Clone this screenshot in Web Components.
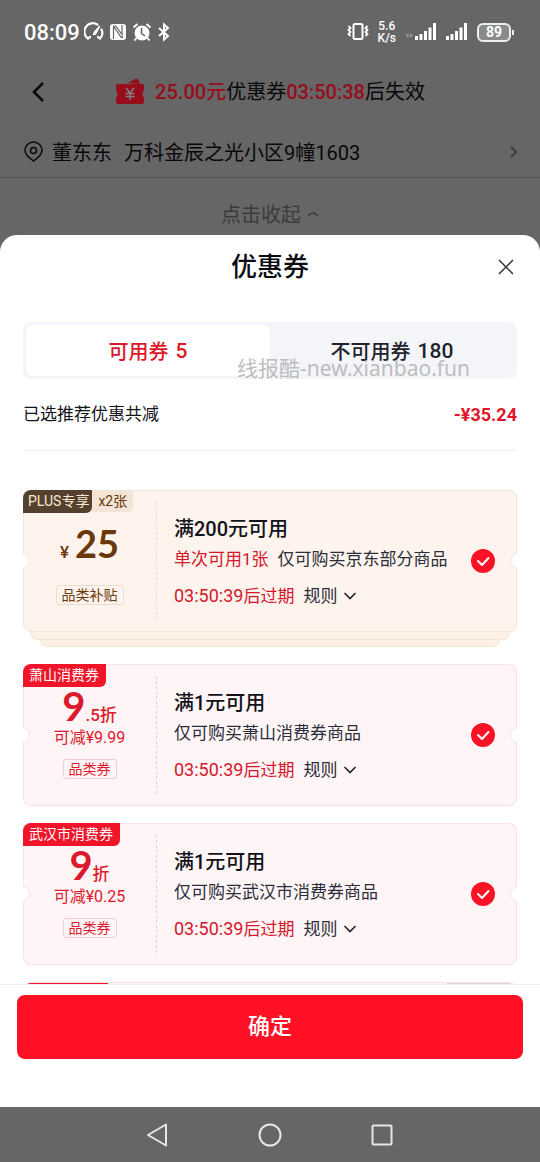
<!DOCTYPE html>
<html lang="zh-CN">
<head>
<meta charset="utf-8">
<meta name="viewport" content="width=device-width, initial-scale=1">
<title>优惠券</title>
<style>
  html, body { margin: 0; height: 100%; }
  body { background: #666; font-family: Roboto, "Noto Sans CJK SC", sans-serif; }
</style>
</head>
<body>
<coupon-page></coupon-page>
<script>
const define = (name, html, setup) => {
  const template = document.createElement('template');
  template.innerHTML = html;
  customElements.define(name, class extends HTMLElement {
    constructor() {
      super();
      this.attachShadow({ mode: 'open' }).append(template.content.cloneNode(true));
    }
    connectedCallback() { if (setup) setup(this, this.shadowRoot); }
  });
};

define('status-bar', `
<style>
  :host { display: flex; align-items: center; height: 64px; padding: 0 29px 0 24px; color: #fff; box-sizing: border-box; }
  .time { font-size: 22px; font-weight: 500; }
  svg { display: block; flex: none; }
  .left, .right { display: flex; align-items: center; gap: 4px; }
  .right { margin-left: auto; gap: 9px; }
  .speed { font-size: 12px; line-height: 12px; font-weight: 500; text-align: center; }
  .speed span { display: block; }
  .battery { position: relative; width: 34px; height: 19px; box-sizing: border-box; border: 2px solid #eee; border-radius: 6px; background: #8a8a8a; font-size: 14px; font-weight: 700; line-height: 15px; text-align: center; }
  .battery::after { content: ""; position: absolute; right: -5px; top: 5px; width: 2px; height: 5px; background: #eee; }
</style>
<div class="left">
  <span class="time">08:09</span>
  <svg width="20" height="20" viewBox="0 0 20 20" fill="none" stroke="#fff" stroke-width="2.200" stroke-linecap="round"><path d="M4 16.500A8 8 0 0 1 13.500 2.700M17.500 7.500A8 8 0 0 1 16 16.500M4 16.500l2-1.500M16 16.500l-2-1.500"/><path d="M9.500 12.500L10.500 10 15.500 4.500 11.500 12z" fill="#fff" stroke-width="1.500" stroke-linejoin="round"/></svg>
  <svg width="20" height="20" viewBox="0 0 20 20"><rect x="2" y="2" width="16" height="16" rx="3" fill="#fff"/><path d="M5.500 17V4.500q1-1.500 2.500 0l6 8V3M6 5l7 10q1.500 1.500 1.500-1" fill="none" stroke="#666" stroke-width="1.200"/></svg>
  <svg width="20" height="20" viewBox="0 0 20 20"><circle cx="10" cy="11" r="7.500" fill="#fff"/><path d="M1.500 5.500l4-3.500M18.500 5.500l-4-3.500M4.500 16l-2 2.500M15.500 16l2 2.500" stroke="#fff" stroke-width="2"/><path d="M9.500 6v5.500l3.500 2.500" stroke="#666" stroke-width="1.500" fill="none"/></svg>
  <svg width="16" height="20" viewBox="0 0 16 20" fill="none" stroke="#fff" stroke-width="2"><path d="M3 6l9 8-4 3.500V2.500L12 6l-9 8"/></svg>
</div>
<div class="right">
  <svg width="22" height="20" viewBox="0 0 22 20" fill="none" stroke="#fff" stroke-width="2"><rect x="6.500" y="2" width="9" height="15" rx="1.500"/><path d="M1.500 4l2 2-2 2 2 2-2 2 2 2M20.500 4l-2 2 2 2-2 2 2 2-2 2" stroke-width="1.800"/></svg>
  <div class="speed"><span>5.6</span><span>K/s</span></div>
  <svg width="32" height="20" viewBox="0 0 32 20"><path d="M3.500 11v5l-3-2.500zM5 11v5l3-2.500z" fill="#999"/><path d="M10 14h3v4h-3zM14.500 12h3v6h-3zM19 9h3v9h-3zM23.500 5.500h3V18h-3zM28 1h3v17h-3z" fill="#fff"/></svg>
  <svg width="22" height="20" viewBox="0 0 22 20"><path d="M0 14h3v4H0zM4.500 12h3v6h-3zM9 9h3v9H9zM13.500 5.500h3V18h-3zM18 1h3v17h-3z" fill="#fff"/></svg>
  <div class="battery">89</div>
</div>`);

define('page-header', `
<style>
  :host { display: block; color: #080808; font-size: 20px; }
  a { color: inherit; text-decoration: none; }
  button { all: unset; cursor: pointer; display: flex; align-items: center; }
  svg { display: block; flex: none; }
  .bar { display: grid; grid-template-columns: 36px 1fr 36px; align-items: center; height: 56px; padding: 0 24px; }
  .notice { display: flex; justify-content: center; align-items: center; gap: 10px; white-space: nowrap; line-height: 28px; }
  b { font-weight: 500; color: #970d1b; }
  .address { display: flex; align-items: center; height: 58px; padding: 6px 20px 0 24px; box-sizing: border-box; border-bottom: 1px solid #525252; }
  .address span { margin-left: 9px; }
  .address span + span { margin-left: 12px; }
  .address svg:last-child { margin-left: auto; }
  .fold { display: flex; width: max-content; margin: 0 auto; height: 57px; padding-top: 14px; box-sizing: border-box; color: #3b3b3b; gap: 6px; }
</style>
<div class="bar">
  <button aria-label="返回"><svg width="28" height="24" viewBox="0 0 28 24" fill="none" stroke="#080808" stroke-width="2.500"><path d="M19 3l-9 9 9 9"/></svg></button>
  <div class="notice">
    <svg width="30" height="28" viewBox="0 0 30 28"><path d="M13 5l7-4q3-1 4 2l1 3z" fill="#970d1b"/><path d="M3 6h24q2 0 2 2v4q-3 4 0 8v4q0 2-2 2H3q-2 0-2-2v-4q3-4 0-8V8q0-2 2-2z" fill="#970d1b"/><path d="M11 10l4 5 4-5M15 15v7M10.500 15.500h9M10.500 18.500h9" fill="none" stroke="#808080" stroke-width="1.500"/></svg>
    <div><b>25.00元</b>优惠券<b>03:50:38</b>后失效</div>
  </div>
</div>
<a class="address" href="#address">
  <svg width="19" height="22" viewBox="0 0 19 22" fill="none" stroke="#080808" stroke-width="1.500"><path d="M9.500 20C6 17.500 1 14 1 9.500a8.500 8.500 0 0 1 17 0C18 14 13 17.500 9.500 20z"/><circle cx="9.500" cy="9.500" r="3"/></svg>
  <span>董东东</span><span>万科金辰之光小区9幢1603</span>
  <svg width="12" height="16" viewBox="0 0 12 16" fill="none" stroke="#333" stroke-width="1.500"><path d="M3 3l5 5-5 5"/></svg>
</a>
<button class="fold">点击收起<svg width="12" height="8" viewBox="0 0 12 8" fill="none" stroke="#3b3b3b" stroke-width="1.500"><path d="M1 6q5-6 10 0"/></svg></button>`);

define('coupon-tabs', `
<style>
  :host { display: grid; grid-template-columns: 1fr 1fr; margin: 0 23px; padding: 3px; height: 57px; box-sizing: border-box; background: #f4f5f9; border-radius: 8px; position: relative; }
  button { all: unset; cursor: pointer; display: flex; justify-content: center; align-items: center; gap: 7px; border-radius: 7px; font-size: 20px; font-weight: 500; color: #20222c; }
  button span { font-size: 21px; }
  [aria-selected=true] { background: #fff; color: #e0162a; }
  .mark { position: absolute; right: 47px; bottom: -3px; font: 21px/28px "Noto Sans", "Noto Sans CJK SC", sans-serif; color: #bdbdc0; white-space: nowrap; pointer-events: none; }
</style>
<button role="tab" aria-selected="true">可用券 <span>5</span></button>
<button role="tab" aria-selected="false">不可用券 <span>180</span></button>
<div class="mark">线报酷-new.xianbao.fun</div>`);

define('coupon-card', `
<style>
  :host { display: block; --ink: #dc1a2d; --bg: #fff5f6; --line: #f8e2e5; --dash: #f3ccd1; --tag: #f01528; --tag-ink: #fff; }
  :host([plus]) { --ink: #6b380b; --bg: #fff4ed; --line: #f5e6da; --dash: #eddccd; --tag: #54402f; --tag-ink: #fbe8d2; }
  .card { position: relative; display: grid; grid-template-columns: 133px 1fr 46px; height: 142px; box-sizing: border-box; background: var(--bg); border-radius: 8px; box-shadow: inset 0 0 0 1px var(--line); overflow: hidden; }
  .card::before, .card::after { content: ""; position: absolute; top: 63px; width: 14px; height: 14px; border: 1px solid var(--line); border-radius: 50%; background: #fff; }
  .card::before { left: -9px; }
  .card::after { right: -9px; }
  .left { display: flex; flex-direction: column; align-items: center; color: var(--ink); position: relative; }
  .left::after { content: ""; position: absolute; right: -1px; top: 12px; bottom: 12px; border-right: 1px dashed var(--dash); }
  .tags { align-self: stretch; display: flex; height: 23px; font-size: 14px; line-height: 23px; white-space: nowrap; }
  .tag { background: var(--tag); color: var(--tag-ink); padding: 0 7px 0 6px; border-radius: 0 0 6px 0; }
  :host([plus]) .tag { padding: 0 3px 0 5px; }
  .count { background: #f3e4d7; color: #6b380b; padding: 0 6px; height: 22px; line-height: 22px; border-radius: 0 0 6px 0; }
  .count:empty { display: none; }
  .amount { height: 40px; display: flex; align-items: baseline; line-height: 38px; font-weight: 500; font-size: 17px; }
  :host([plus]) .amount { height: 62px; line-height: 60px; gap: 6px; }
  .off { font-size: 16px; line-height: 22px; white-space: nowrap; }
  .off:empty { display: none; }
  .kind { margin-top: 10px; border: 1px solid var(--dash); border-radius: 3px; padding: 0 5px; font-size: 14px; line-height: 18px; white-space: nowrap; }
  .body { padding: 26px 0 0 18px; color: #2b2e3a; font-size: 17px; white-space: nowrap; }
  h3 { margin: 0; font-size: 20px; line-height: 26px; font-weight: 500; color: #11131a; }
  .desc { margin-top: 5px; line-height: 24px; display: flex; gap: 9px; }
  .desc em, .time { color: #d5172b; font-style: normal; }
  .desc em:empty { display: none; }
  .meta { margin-top: 13px; line-height: 24px; display: flex; align-items: center; gap: 9px; }
  .digits { font-size: 18px; }
  button { all: unset; cursor: pointer; display: flex; align-items: center; gap: 6px; }
  label { display: flex; align-items: center; position: relative; cursor: pointer; }
  input { appearance: none; margin: 0; width: 24px; height: 24px; border-radius: 50%; background: #fc1226; }
  label svg { position: absolute; left: 0; pointer-events: none; }
  .layer { display: none; height: 8px; box-sizing: border-box; border: 1px solid #f5e4d3; border-top: 0; border-radius: 0 0 9px 9px; background: #fdf1e4; }
  :host([plus]) .layer { display: block; margin: 0 7px; }
  :host([plus]) .layer + .layer { margin: 0 17px; height: 7px; }
</style>
<article class="card">
  <div class="left">
    <div class="tags"><span class="tag"></span><span class="count"></span></div>
    <div class="amount"><slot name="amount"></slot></div>
    <div class="off"></div>
    <div class="kind"></div>
  </div>
  <div class="body">
    <h3></h3>
    <div class="desc"><em></em><span></span></div>
    <div class="meta"><div class="time"><span class="digits">03:50:39</span>后过期</div>
      <button>规则<svg width="14" height="10" viewBox="0 0 14 10" fill="none" stroke="#20222c" stroke-width="1.600"><path d="M1.500 2L7 7.500 12.500 2"/></svg></button></div>
  </div>
  <label><input type="checkbox" checked aria-label="选择优惠券"><svg width="24" height="24" viewBox="0 0 24 24" fill="none" stroke="#fff" stroke-width="2" stroke-linecap="round" stroke-linejoin="round"><path d="M7 12l4 4 6.500-7"/></svg></label>
</article>
<div class="layer"></div><div class="layer"></div>`,
(host, root) => {
  const fill = { '.tag': 'tag', '.count': 'count', '.off': 'off', '.kind': 'kind', 'h3': 'heading', '.desc em': 'limit', '.desc span': 'desc' };
  for (const [sel, attr] of Object.entries(fill)) root.querySelector(sel).textContent = host.getAttribute(attr) || '';
});

define('coupon-peek', `
<style>
  :host { display: flex; justify-content: space-between; height: 142px; box-sizing: border-box; border: 1px solid #f8e2e5; border-radius: 8px; background: #fff5f6; overflow: hidden; }
  i { width: 84px; height: 22px; margin-top: -1px; background: #f01528; border-radius: 0 0 6px 0; }
  i + i { width: 64px; margin-right: 5px; background: #ddd5d7; }
</style><i></i><i></i>`);

define('coupon-sheet', `
<style>
  :host { display: flex; flex-direction: column; flex: 1; min-height: 0; background: #fff; border-radius: 17px 17px 0 0; overflow: hidden; }
  header { display: grid; grid-template-columns: 1fr auto 1fr; align-items: center; height: 64px; padding: 0 24px; flex: none; }
  h2 { grid-column: 2; margin: 0; font-size: 26px; line-height: 38px; font-weight: 500; color: #0c0d12; }
  button { all: unset; cursor: pointer; box-sizing: border-box; }
  header button { justify-self: end; }
  svg { display: block; }
  coupon-tabs { margin-top: 23px; flex: none; }
  .sum { display: flex; justify-content: space-between; align-items: center; height: 72px; box-sizing: border-box; margin: 0 23px; border-bottom: 1px solid #f2f2f4; font-size: 17px; color: #14151b; flex: none; }
  .sum span { padding-bottom: 4px; }
  .sum b { color: #e0162a; font-size: 18px; }
  .list { flex: 1; min-height: 0; overflow: auto; scrollbar-width: none; display: flex; flex-direction: column; gap: 17px; padding: 39px 23px 0; }
  .list > * { flex: none; }
  coupon-card b { font: 700 40px/38px Lato, sans-serif; }
  coupon-card[plus] b { font-size: 38px; line-height: 60px; }
  footer { flex: none; border-top: 1px solid #f0f0f1; padding: 10px 17px 48px; }
  footer button { display: block; width: 100%; height: 64px; line-height: 64px; text-align: center; border-radius: 8px; background: #ff1024; color: #fff; font-size: 22px; font-weight: 500; }
</style>
<header><h2>优惠券</h2><button aria-label="关闭"><svg width="20" height="20" viewBox="0 0 20 20" fill="none" stroke="#333" stroke-width="1.500"><path d="M3 3l14 14M17 3L3 17"/></svg></button></header>
<coupon-tabs role="tablist"></coupon-tabs>
<div class="sum"><span>已选推荐优惠共减</span><b>-¥35.24</b></div>
<div class="list">
  <coupon-card plus tag="PLUS专享" count="x2张" kind="品类补贴" heading="满200元可用" limit="单次可用1张" desc="仅可购买京东部分商品"><span slot="amount">¥</span><b slot="amount">25</b></coupon-card>
  <coupon-card tag="萧山消费券" off="可减¥9.99" kind="品类券" heading="满1元可用" desc="仅可购买萧山消费券商品"><b slot="amount">9</b><span slot="amount">.5折</span></coupon-card>
  <coupon-card tag="武汉市消费券" off="可减¥0.25" kind="品类券" heading="满1元可用" desc="仅可购买武汉市消费券商品"><b slot="amount">9</b><span slot="amount">折</span></coupon-card>
  <coupon-peek></coupon-peek>
</div>
<footer><button>确定</button></footer>`);

define('system-nav', `
<style>
  :host { display: flex; justify-content: center; align-items: center; gap: 88px; height: 55px; flex: none; background: #666; }
  button { all: unset; cursor: pointer; }
  svg { display: block; }
</style>
<button aria-label="返回"><svg width="24" height="24" viewBox="0 0 24 24" fill="none" stroke="#e6e6e6" stroke-width="2" stroke-linejoin="round"><path d="M20 1.500v21L2 12z"/></svg></button>
<button aria-label="主页"><svg width="24" height="24" viewBox="0 0 24 24" fill="none" stroke="#e6e6e6" stroke-width="2"><circle cx="12" cy="12" r="10.500"/></svg></button>
<button aria-label="最近任务"><svg width="24" height="24" viewBox="0 0 24 24" fill="none" stroke="#e6e6e6" stroke-width="2"><rect x="2.500" y="2.500" width="19" height="19" rx="1"/></svg></button>`);

define('coupon-page', `
<style>:host { display: flex; flex-direction: column; height: 100vh; }</style>
<status-bar></status-bar>
<page-header></page-header>
<coupon-sheet></coupon-sheet>
<system-nav></system-nav>`);
</script>
</body>
</html>
